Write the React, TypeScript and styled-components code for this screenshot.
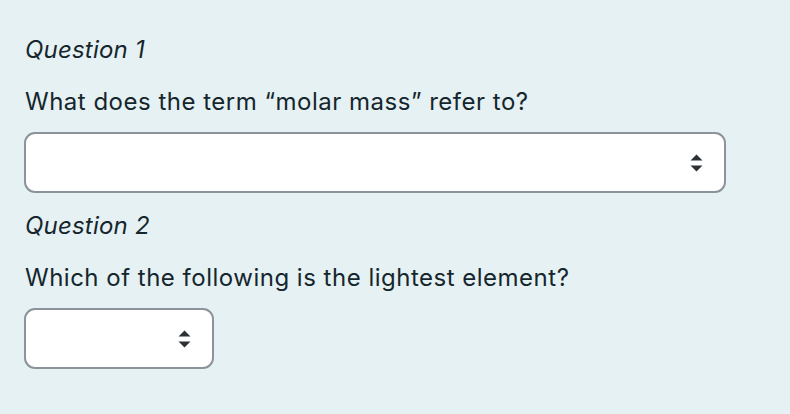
import React from "react";
import styled, { createGlobalStyle } from "styled-components";

const Global = createGlobalStyle`
  html, body { margin: 0; padding: 0; background: #e6f1f4; }
  body { font-family: Inter, "Noto Sans", "Liberation Sans", sans-serif; color: #15262d; }
`;

const Page = styled.main`
  min-height: 414px;
  box-sizing: border-box;
  padding: 32px 24px 20px 25px;
  background: #e6f1f4;
`;

const QuestionBlock = styled.section`
  display: flex;
  flex-direction: column;
  margin-bottom: 15px;
`;

const QuestionLabel = styled.h3`
  margin: 0 0 16px 0;
  font-size: 24px;
  line-height: 36px;
  font-weight: 400;
  font-style: italic;
  letter-spacing: 0.2px;
`;

const Prompt = styled.label`
  display: block;
  margin: 0 0 12px 0;
  font-size: 24px;
  line-height: 36px;
  font-weight: 400;
  letter-spacing: 0.5px;
`;

const SelectWrap = styled.div<{ $width: number }>`
  position: relative;
  width: ${(p) => p.$width}px;
  height: 61px;
  margin-left: -1px;
`;

const Select = styled.select`
  appearance: none;
  -webkit-appearance: none;
  width: 100%;
  height: 100%;
  box-sizing: border-box;
  border: 2px solid #8d939a;
  border-radius: 11px;
  background: #ffffff;
  font-family: inherit;
  font-size: 20px;
  padding: 0 44px 0 16px;
  color: #15262d;
  outline: none;
`;

const Arrows = styled.svg`
  position: absolute;
  right: 23px;
  top: 50%;
  transform: translateY(-50%);
  pointer-events: none;
`;

function SortArrows() {
  return (
    <Arrows width="13" height="18" viewBox="0 0 13 18" aria-hidden="true">
      <path d="M6.5 0.5 L12.5 6.6 L0.5 6.6 Z" fill="#2c3136" />
      <path d="M6.5 17.5 L12.5 11.4 L0.5 11.4 Z" fill="#2c3136" />
    </Arrows>
  );
}

function Question({ n, text, width }: { n: number; text: string; width: number }) {
  return (
    <QuestionBlock>
      <QuestionLabel>Question {n}</QuestionLabel>
      <Prompt htmlFor={`q${n}`}>{text}</Prompt>
      <SelectWrap $width={width}>
        <Select id={`q${n}`} defaultValue="">
          <option value=""></option>
        </Select>
        <SortArrows />
      </SelectWrap>
    </QuestionBlock>
  );
}

export default function App() {
  return (
    <>
      <Global />
      <Page>
        <Question n={1} text="What does the term “molar mass” refer to?" width={702} />
        <Question n={2} text="Which of the following is the lightest element?" width={190} />
      </Page>
    </>
  );
}
